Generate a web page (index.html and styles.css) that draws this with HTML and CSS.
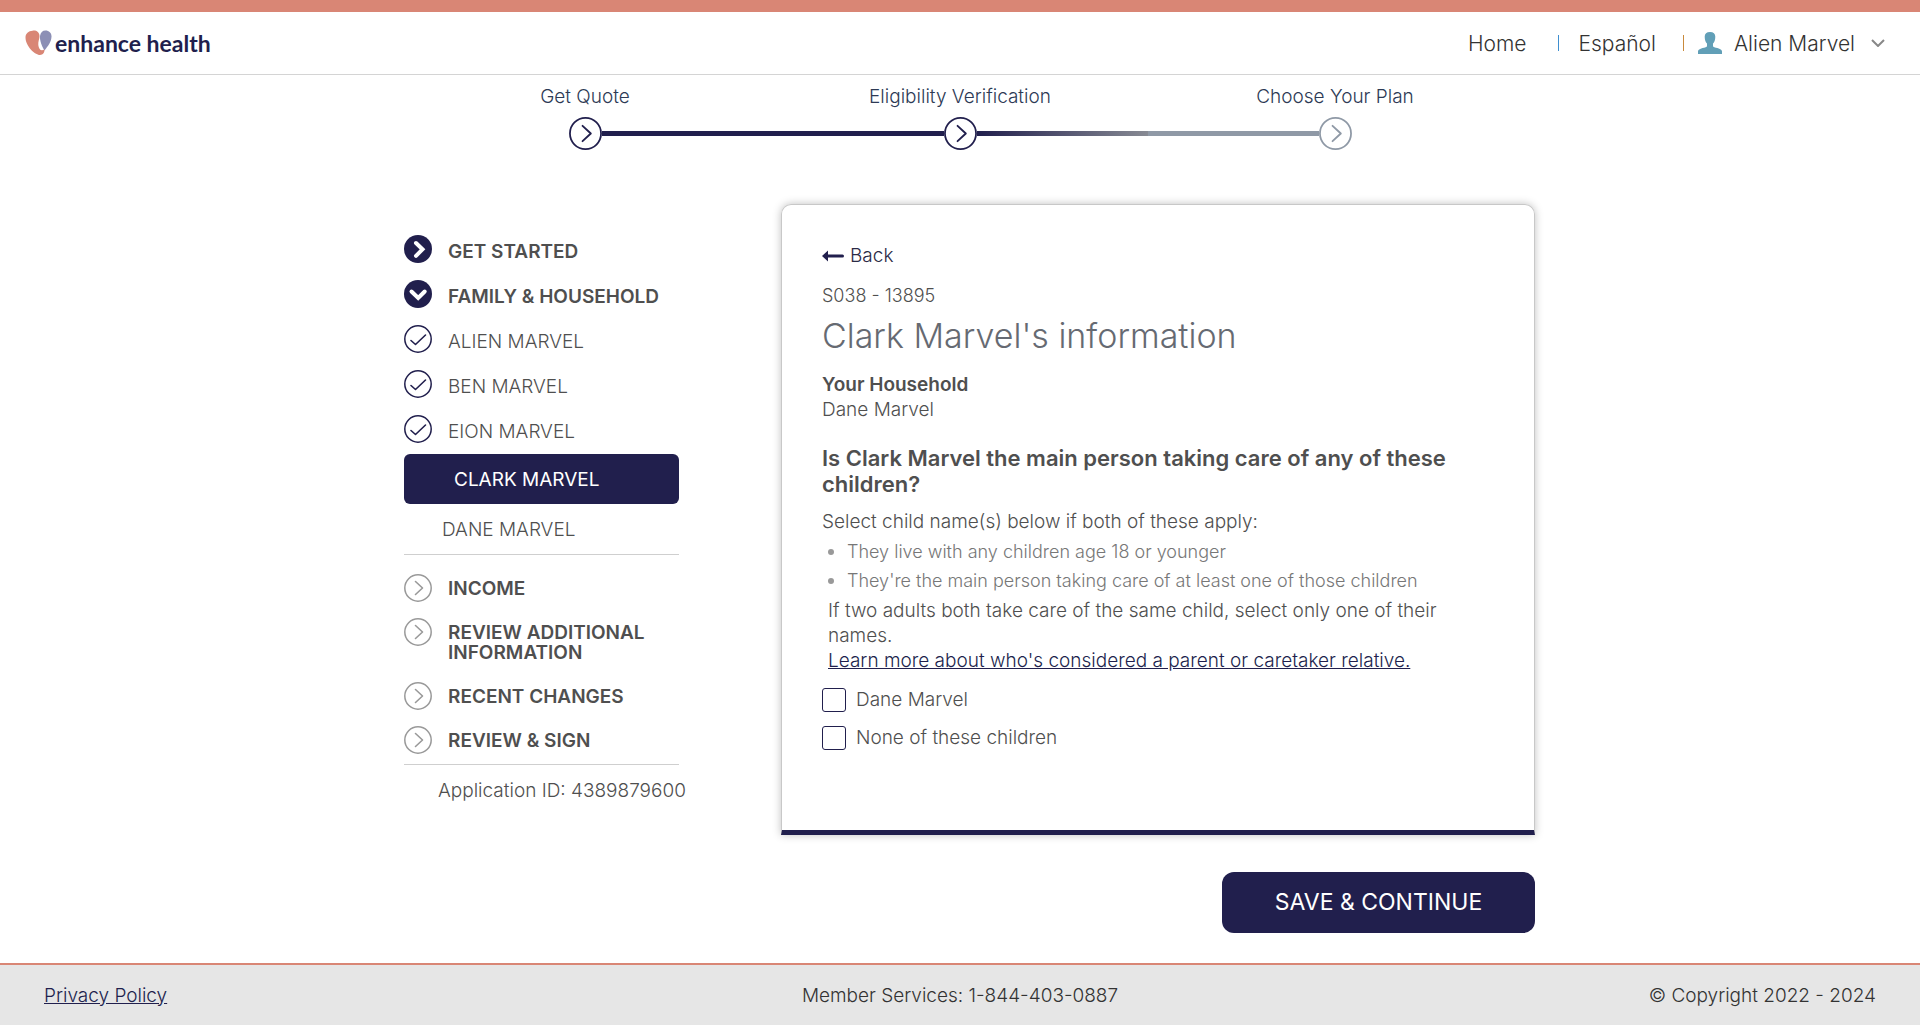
FILE: index.html
```html
<!DOCTYPE html>
<html lang="en">
<head>
<meta charset="utf-8">
<meta name="viewport" content="width=device-width, initial-scale=1">
<title>Enhance Health - Family &amp; Household</title>
<link rel="stylesheet" href="styles.css">
</head>
<body>
<svg class="sprite" aria-hidden="true">
  <symbol id="ring-next" viewBox="0 0 28 28">
    <circle cx="14" cy="14" r="13.2" fill="none" stroke="currentColor" stroke-width="1.5"/>
    <path d="M11.500 7.500l7 6.500-7 6.500" fill="none" stroke="currentColor" stroke-width="1.600" stroke-linecap="round" stroke-linejoin="round"/>
  </symbol>
  <symbol id="ring-check" viewBox="0 0 28 28">
    <circle cx="14" cy="14" r="13.200" fill="none" stroke="currentColor" stroke-width="1.500"/>
    <path d="M7 15.500l4.500 4L21.500 10" fill="none" stroke="currentColor" stroke-width="1.600" stroke-linecap="round" stroke-linejoin="round"/>
  </symbol>
  <symbol id="disc-next" viewBox="0 0 28 28">
    <circle cx="14" cy="14" r="14" fill="currentColor"/>
    <path d="M12 8l6.500 6.300L12 20.800" fill="none" stroke="#fff" stroke-width="4" stroke-linecap="round" stroke-linejoin="miter"/>
  </symbol>
  <symbol id="disc-down" viewBox="0 0 28 28">
    <circle cx="14" cy="14" r="14" fill="currentColor"/>
    <path d="M7.500 11.500l6.700 6.500 6.500-6.500" fill="none" stroke="#fff" stroke-width="4" stroke-linecap="round" stroke-linejoin="miter"/>
  </symbol>
</svg>

<header class="header">
  <a class="logo" href="#">
    <svg class="logo-mark" viewBox="0 0 27 26" aria-hidden="true">
      <path fill="#8c8fb5" d="M19.500 20.500C17 17 14.500 10 15 6 15.500 2.500 17.500.500 20.500.500c3.500 0 6 2.500 6 6 0 5-3.500 9.500-7 14z"/>
      <path fill="#d98675" d="M7.500.700C11 0 14.500 2 14.500 6c0 3-1.500 5.500-1.200 9 .3 3 1.700 5.300 3.700 5.300 1 0 1.800-.5 2.400-1 .4 3.200-1.400 5.700-4.400 5.700C10 25 .5 16 .5 7.500.5 3.500 3.500.900 7.500.700z"/>
    </svg>
    <span>enhance health</span>
  </a>
  <nav class="nav" aria-label="Account">
    <a href="#">Home</a>
    <span class="nav-divider nav-divider-blue"></span>
    <a href="#">Español</a>
    <span class="nav-divider"></span>
    <button class="user" type="button">
      <svg class="user-icon" viewBox="0 0 24 22" aria-hidden="true">
        <path fill="#619fb7" d="M12 0c3.500 0 5.300 2 5.300 4.800 0 3.500-1 5.500-2.300 6.700v2.300c0 .8.500 1.200 1.300 1.400 4.500 1 7.700 2 7.700 4.300V22H0v-2.500c0-2.300 3.200-3.300 7.700-4.300.8-.2 1.300-.6 1.300-1.400v-2.300C7.700 10.300 6.700 8.300 6.700 4.800 6.700 2 8.500 0 12 0z"/>
      </svg>
      <span>Alien Marvel</span>
      <svg class="user-caret" viewBox="0 0 14 8" aria-hidden="true"><path d="M1 1l6 6 6-6" fill="none" stroke="#888" stroke-width="2"/></svg>
    </button>
  </nav>
</header>

<section class="progress" aria-label="Progress">
  <ol class="progress-labels">
    <li>Get Quote</li>
    <li>Eligibility Verification</li>
    <li>Choose Your Plan</li>
  </ol>
  <div class="rail" aria-hidden="true">
    <svg class="rail-dot"><use href="#ring-next"/></svg>
    <span class="rail-line"></span>
    <svg class="rail-dot"><use href="#ring-next"/></svg>
    <span class="rail-line rail-line-current"></span>
    <svg class="rail-dot rail-dot-pending"><use href="#ring-next"/></svg>
  </div>
</section>

<main class="main">
  <nav class="sidebar" aria-label="Application sections">
    <ul class="side-list side-list-open">
      <li><a class="side-item side-section" href="#"><svg class="side-icon"><use href="#disc-next"/></svg><span>GET STARTED</span></a></li>
      <li><a class="side-item side-section" href="#"><svg class="side-icon"><use href="#disc-down"/></svg><span>FAMILY &amp; HOUSEHOLD</span></a></li>
      <li><a class="side-item" href="#"><svg class="side-icon"><use href="#ring-check"/></svg><span>ALIEN MARVEL</span></a></li>
      <li><a class="side-item" href="#"><svg class="side-icon"><use href="#ring-check"/></svg><span>BEN MARVEL</span></a></li>
      <li><a class="side-item" href="#"><svg class="side-icon"><use href="#ring-check"/></svg><span>EION MARVEL</span></a></li>
      <li><a class="side-member side-member-active" href="#" aria-current="page">CLARK MARVEL</a></li>
      <li><a class="side-member" href="#">DANE MARVEL</a></li>
    </ul>
    <ul class="side-list side-list-pending">
      <li><a class="side-item side-section" href="#"><svg class="side-icon"><use href="#ring-next"/></svg><span>INCOME</span></a></li>
      <li><a class="side-item side-section" href="#"><svg class="side-icon"><use href="#ring-next"/></svg><span>REVIEW ADDITIONAL INFORMATION</span></a></li>
      <li><a class="side-item side-section" href="#"><svg class="side-icon"><use href="#ring-next"/></svg><span>RECENT CHANGES</span></a></li>
      <li><a class="side-item side-section" href="#"><svg class="side-icon"><use href="#ring-next"/></svg><span>REVIEW &amp; SIGN</span></a></li>
    </ul>
    <p class="application-id">Application ID: 4389879600</p>
  </nav>

  <form class="content">
    <div class="card">
      <a class="back" href="#">
        <svg class="back-icon" viewBox="0 0 22 12" aria-hidden="true"><path fill="#211f4d" d="M0 6L6 .500v4h14.500a1.500 1.500 0 0 1 0 3H6v4z"/></svg>
        <span>Back</span>
      </a>
      <p class="code">S038 - 13895</p>
      <h1 class="title">Clark Marvel's information</h1>
      <h2 class="household">Your Household</h2>
      <p>Dane Marvel</p>
      <fieldset class="question">
        <legend>Is Clark Marvel the main person taking care of any of these children?</legend>
        <p>Select child name(s) below if both of these apply:</p>
        <ul class="criteria">
          <li>They live with any children age 18 or younger</li>
          <li>They're the main person taking care of at least one of those children</li>
        </ul>
        <p class="note">If two adults both take care of the same child, select only one of their names.<br>
        <a href="#">Learn more about who's considered a parent or caretaker relative.</a></p>
        <div class="choices">
          <label><input type="checkbox" name="child" value="dane"><span>Dane Marvel</span></label>
          <label><input type="checkbox" name="child" value="none"><span>None of these children</span></label>
        </div>
      </fieldset>
    </div>
    <button class="save" type="submit">SAVE &amp; CONTINUE</button>
  </form>
</main>

<footer class="footer">
  <a href="#">Privacy Policy</a>
  <span>Member Services: 1-844-403-0887</span>
  <span class="copyright">© Copyright 2022 - 2024</span>
</footer>
</body>
</html>
```

FILE: styles.css
```css
:root {
  --navy: #211f4d;
  --coral: #d98675;
  --text: #4f4f4f;
  --rule: #cfcfcf;
}

* { box-sizing: border-box; }

body {
  margin: 0;
  min-height: 100vh;
  display: flex;
  flex-direction: column;
  background: #fff;
  color: var(--text);
  font: 300 19px/25px Inter, "Liberation Sans", sans-serif;
}

h1, h2, p, ul, ol { margin: 0; padding: 0; }
ul, ol { list-style: none; }
a { color: inherit; text-decoration: none; }
button { font: inherit; color: inherit; border: 0; background: none; padding: 0; cursor: pointer; }
.sprite { display: none; }

/* Header */
.header {
  display: flex;
  align-items: center;
  justify-content: space-between;
  height: 75px;
  padding: 0 35px 0 25px;
  border-top: 12px solid var(--coral);
  border-bottom: 1px solid #d4d4d4;
}
.logo {
  display: flex;
  align-items: center;
  gap: 3px;
  color: var(--navy);
  font: 700 23px/30px Lato, sans-serif;
}
.logo-mark { width: 27px; height: 26px; }
.nav { display: flex; align-items: center; color: #333; font-size: 21px; }
.nav-divider { width: 1px; height: 16px; margin: 0 14px 0 27px; background: #c98a3c; }
.nav-divider-blue { margin: 0 20px 0 31px; background: #3f8fd0; }
.user { display: flex; align-items: center; gap: 12px; }
.user-icon { width: 24px; height: 22px; }
.user-caret { width: 14px; height: 8px; margin-left: 4px; }

/* Progress */
.progress { width: 100%; max-width: 1125px; margin: 0 auto; padding-top: 9px; color: var(--navy); }
.progress-labels { display: grid; grid-template-columns: repeat(3, 1fr); text-align: center; color: #2d3a55; }
.rail { display: flex; align-items: center; margin: 8px calc(100% / 6 - 17px) 0 calc(100% / 6 - 16px); }
.rail-dot { width: 33px; height: 33px; flex: none; }
.rail-dot-pending { color: #8f99a6; }
.rail-line { flex: 1; height: 5px; background: var(--navy); }
.rail-line-current { background: linear-gradient(90deg, var(--navy), #878a93 50%, #8f99a6 50%); }

/* Main columns */
.main {
  flex: 1;
  display: flex;
  justify-content: space-between;
  align-items: flex-start;
  width: 100%;
  max-width: 1150px;
  margin: 0 auto;
  padding: 54px 0 30px 19px;
}
.sidebar { width: 275px; padding-top: 23px; }
.content { width: 754px; display: flex; flex-direction: column; align-items: flex-end; gap: 37px; }

/* Sidebar */
.side-list { border-bottom: 1px solid var(--rule); }
.side-item { display: flex; gap: 16px; padding: 8px 0; }
.side-item span { padding: 5px 0 3px; line-height: 20px; }
.side-list-open .side-item { padding-bottom: 9px; }
.side-list-open .side-item span { padding: 7px 0 1px; }
.side-section { font-weight: 600; }
.side-icon { flex: none; width: 28px; height: 28px; color: var(--navy); }
.side-list-pending { padding: 11px 0 2px; }
.side-list-pending .side-icon { color: #999; }
.side-member { display: block; padding: 13px 38px 12px; }
.side-member-active { margin-top: 2px; padding: 13px 50px 12px; border-radius: 6px; background: var(--navy); color: #fff; font-weight: 400; }
.application-id { padding: 13px 0 0 34px; white-space: nowrap; }

/* Card */
.card {
  width: 100%;
  padding: 38px 40px 80px;
  border: 1px solid #c8c8c8;
  border-bottom: 5px solid var(--navy);
  border-radius: 10px 10px 0 0;
  box-shadow: 0 0 8px rgba(0, 0, 0, .25);
}
.back { display: flex; align-items: center; gap: 6px; color: #2b2a45; }
.back-icon { width: 22px; height: 12px; }
.code { margin-top: 15px; font-size: 18px; }
.title { margin-top: 8px; color: #666a72; font-size: 34px; line-height: 40px; font-weight: 300; }
.household { margin-top: 16px; font-size: 19px; line-height: 25px; font-weight: 600; }
.question { margin: 23px 0 0; padding: 0; border: 0; min-width: 0; }
.question legend { margin-bottom: 12px; padding: 0; font-size: 22px; line-height: 26px; font-weight: 600; }
.criteria { padding: 3px 0 3px 6px; color: #777; font-size: 18px; line-height: 29px; }
.criteria li { display: flex; align-items: center; gap: 13px; }
.criteria li::before { content: ""; width: 6px; height: 6px; border-radius: 50%; background: #999; }
.note { padding-left: 6px; }
.note a { color: var(--navy); text-decoration: underline; }
.choices { display: flex; flex-direction: column; gap: 14px; padding-top: 15px; }
.choices label { display: flex; align-items: center; gap: 10px; line-height: 24px; }
.choices input {
  appearance: none;
  width: 24px;
  height: 24px;
  margin: 0;
  border: 1px solid var(--navy);
  border-radius: 3px;
  background: #fff;
}
.choices input:checked { background: var(--navy); }
.save { width: 313px; height: 61px; border-radius: 12px; background: var(--navy); color: #fff; font-size: 23px; font-weight: 400; }

/* Footer */
.footer {
  display: grid;
  grid-template-columns: repeat(3, 1fr);
  align-items: center;
  justify-items: center;
  height: 62px;
  padding: 0 44px;
  border-top: 2px solid var(--coral);
  background: #e6e6e6;
  color: #333;
}
.footer a { justify-self: start; color: var(--navy); text-decoration: underline; }
.copyright { justify-self: end; }
```
